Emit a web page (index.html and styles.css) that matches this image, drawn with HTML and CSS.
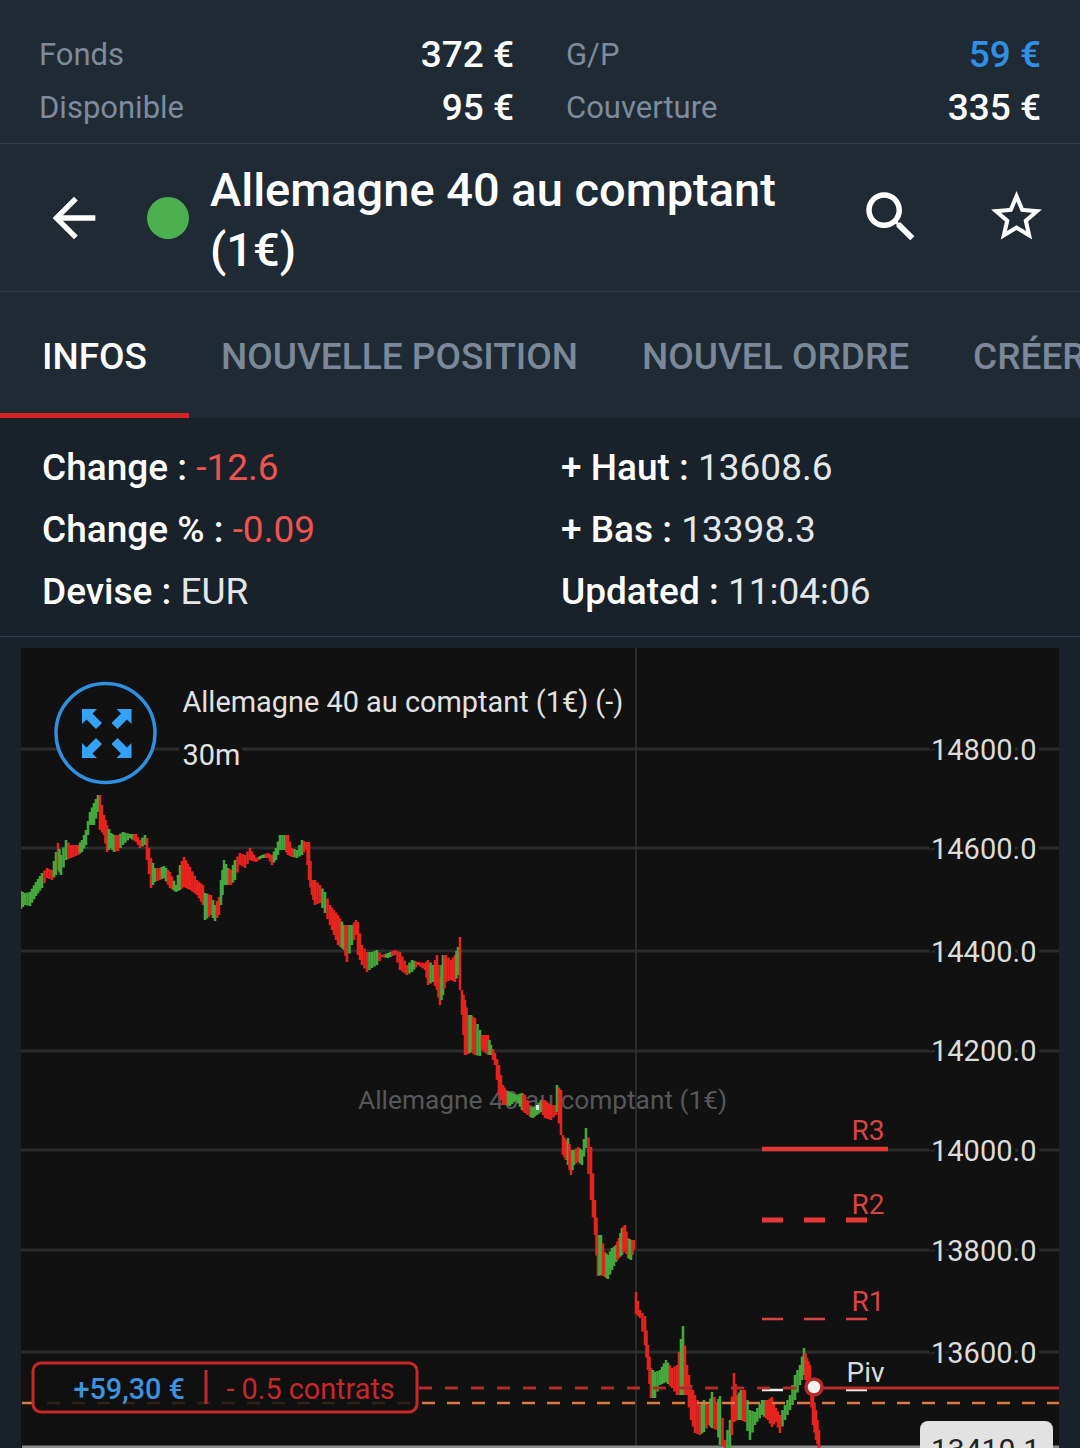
FILE: index.html
```html
<!DOCTYPE html>
<html lang="fr">
<head>
  <meta charset="UTF-8" />
  <meta name="viewport" content="width=device-width, initial-scale=1.0"/>
  <title>Allemagne 40 au comptant</title>
  <link rel="stylesheet" href="styles.css">
</head>
<body>
  <div class="screen">
    <!-- Account summary -->
    <div class="account">
      <div class="account-row"><span class="account-label">Fonds</span><span class="account-value">372 €</span></div>
      <div class="account-row"><span class="account-label">G/P</span><span class="account-value blue">59 €</span></div>
      <div class="account-row"><span class="account-label">Disponible</span><span class="account-value">95 €</span></div>
      <div class="account-row"><span class="account-label">Couverture</span><span class="account-value">335 €</span></div>
    </div>

    <!-- Instrument header -->
    <header class="instrument">
      <svg class="icon-back" viewBox="0 0 24 24"><path d="M20 11H7.83l5.59-5.59L12 4l-8 8 8 8 1.41-1.41L7.83 13H20v-2z"/></svg>
      <span class="status-dot"></span>
      <h1 class="instrument-name">Allemagne 40 au comptant (1€)</h1>
      <svg class="icon-search" viewBox="0 0 24 24"><path d="M15.5 14h-.79l-.28-.27C15.41 12.59 16 11.11 16 9.5 16 5.91 13.09 3 9.5 3S3 5.91 3 9.5 5.91 16 9.5 16c1.61 0 3.09-.59 4.23-1.57l.27.28v.79l5 4.99L20.49 19l-4.99-5zm-6 0C7.01 14 5 11.99 5 9.5S7.01 5 9.5 5 14 7.01 14 9.5 11.99 14 9.5 14z"/></svg>
      <svg class="icon-star" viewBox="0 0 24 24"><path d="M22 9.24l-7.19-.62L12 2 9.19 8.63 2 9.24l5.46 4.73L5.82 21 12 17.27 18.18 21l-1.63-7.03L22 9.24zM12 15.4l-3.76 2.27 1-4.28-3.32-2.88 4.38-.38L12 6.1l1.71 4.04 4.38.38-3.32 2.88 1 4.28L12 15.4z"/></svg>
    </header>

    <!-- Tabs -->
    <nav class="tabs">
      <a class="tab active">INFOS</a>
      <a class="tab">NOUVELLE POSITION</a>
      <a class="tab">NOUVEL ORDRE</a>
      <a class="tab">CRÉER</a>
    </nav>

    <!-- Quote details -->
    <div class="quote">
      <div><b>Change :</b> <span class="down">-12.6</span></div>
      <div><b>+ Haut :</b> 13608.6</div>
      <div><b>Change % :</b> <span class="down">-0.09</span></div>
      <div><b>+ Bas :</b> 13398.3</div>
      <div><b>Devise :</b> EUR</div>
      <div><b>Updated :</b> 11:04:06</div>
    </div>

    <!-- Chart: the viewBox uses page coordinates -->
    <div class="chart">
      <svg class="chart-svg" viewBox="21 648 1038 800">
        <g class="grid">
          <line x1="21" x2="1059" y1="749" y2="749"/>
          <line x1="21" x2="1059" y1="848" y2="848"/>
          <line x1="21" x2="1059" y1="951" y2="951"/>
          <line x1="21" x2="1059" y1="1051" y2="1051"/>
          <line x1="21" x2="1059" y1="1150" y2="1150"/>
          <line x1="21" x2="1059" y1="1250" y2="1250"/>
          <line x1="21" x2="1059" y1="1352" y2="1352"/>
          <line x1="636" x2="636" y1="648" y2="1448"/>
        </g>
        <line class="axis-bottom" x1="22" x2="1059" y1="1447" y2="1447"/>

        <text class="watermark" x="358" y="1109">Allemagne 40 au comptant (1€)</text>

        <g id="bars"></g>
        <rect class="spot" x="536" y="1105" width="3" height="5"/>

        <g class="axis">
          <text x="931" y="760">14800.0</text>
          <text x="931" y="859">14600.0</text>
          <text x="931" y="962">14400.0</text>
          <text x="931" y="1061">14200.0</text>
          <text x="931" y="1161">14000.0</text>
          <text x="931" y="1261">13800.0</text>
          <text x="931" y="1363">13600.0</text>
        </g>

        <text class="chart-title" x="182.5" y="712">Allemagne 40 au comptant (1€) (-)</text>
        <text class="chart-title outlined" x="182.5" y="765">30m</text>

        <circle class="expand-ring" cx="105.5" cy="733" r="49.5"/>
        <g class="expand-arrows">
          <path id="arrow" d="M82 709h15l-4.5 4.5 9.5 9.5-6 6-9.5-9.5-4.5 4.5z"/>
          <use href="#arrow" transform="matrix(-1 0 0 1 213.5 0)"/>
          <use href="#arrow" transform="matrix(1 0 0 -1 0 1467)"/>
          <use href="#arrow" transform="matrix(-1 0 0 -1 213.5 1467)"/>
        </g>

        <!-- Pivot levels -->
        <line class="level r3" x1="762" x2="888" y1="1149" y2="1149"/>
        <line class="level r2" x1="762" x2="867" y1="1220" y2="1220"/>
        <line class="level r1" x1="762" x2="867" y1="1319" y2="1319"/>
        <line class="level piv" x1="762" x2="867" y1="1390" y2="1390"/>
        <text class="level-label red" x="851.5" y="1140">R3</text>
        <text class="level-label red" x="851.5" y="1214">R2</text>
        <text class="level-label red" x="851.5" y="1311">R1</text>
        <text class="level-label" x="846.5" y="1382">Piv</text>

        <!-- Open position -->
        <line class="entry-line" x1="22" x2="1059" y1="1403" y2="1403"/>
        <line class="pos-dash" x1="419" x2="813" y1="1388" y2="1388"/>
        <line class="pos-solid" x1="813" x2="1059" y1="1388" y2="1388"/>
        <circle class="pos-dot" cx="814" cy="1387" r="8"/>
        <rect class="pos-box" x="33" y="1363" width="384" height="49" rx="8"/>
        <text class="pos-gain" x="73.5" y="1399">+59,30 €</text>
        <line class="pos-sep" x1="206" x2="206" y1="1370" y2="1404"/>
        <text class="pos-size" x="226.5" y="1399">- 0.5 contrats</text>

        <rect class="price-tag" x="920" y="1421" width="133" height="50" rx="8"/>
        <text class="price-text" x="931" y="1460">13410.1</text>
      </svg>
    </div>
  </div>
  <script src="chart.js"></script>
</body>
</html>
```

FILE: styles.css
```css
/* Global Reset */
* { margin: 0; padding: 0; box-sizing: border-box; }
html, body { height: 100%; background: #19212a; overflow: hidden; }
body { font-family: "Roboto", "Liberation Sans", sans-serif; color: #fff; }
.screen { width: 1080px; height: 1448px; overflow: hidden; }

/* Account summary */
.account {
  display: grid;
  grid-template-columns: 475px 475px;
  column-gap: 52px;
  grid-auto-rows: 53px;
  height: 144px;
  padding: 28px 39px 0 39px;
  background: #202a35;
  border-bottom: 1px solid #323d49;
}
.account-row { display: flex; justify-content: space-between; align-items: center; }
.account-label { font-size: 31px; color: #7d8b9c; }
.account-value { font-size: 37px; font-weight: 500; }
.blue { color: #2e90e6; }

/* Instrument header */
.instrument {
  display: flex;
  align-items: center;
  height: 148px;
  background: #202a35;
  border-bottom: 1px solid #323d49;
}
.instrument svg { fill: #fff; flex: none; }
.icon-back { width: 64px; height: 64px; margin-left: 42px; }
.status-dot {
  flex: none;
  width: 42px;
  height: 42px;
  margin-left: 41px;
  border-radius: 50%;
  background: #4caf50;
}
.instrument-name {
  flex: 1;
  margin-left: 21px;
  padding-top: 5px;
  font-size: 47px;
  font-weight: 500;
  line-height: 60px;
}
.icon-search { width: 66px; height: 66px; margin-top: -2px; }
.icon-star { width: 61px; height: 61px; margin: -2px 33px 0 62px; }

/* Tabs */
.tabs {
  display: flex;
  height: 126px;
  background: #202a35;
  white-space: nowrap;
}
.tab {
  flex: none;
  display: flex;
  align-items: center;
  padding: 2px 32px 0;
  font-size: 37px;
  font-weight: 500;
  color: #7a8899;
}
.tab.active {
  width: 189px;
  padding: 2px 0 0 42px;
  color: #fff;
  border-bottom: 5px solid #d32424;
  border-top: 5px solid transparent;
}

/* Quote details */
.quote {
  display: grid;
  grid-template-columns: 519px 1fr;
  grid-auto-rows: 62px;
  height: 219px;
  padding: 19px 0 0 42px;
  font-size: 37px;
  line-height: 62px;
  color: #e4e7ea;
  border-bottom: 1px solid #323d49;
}
.quote b { font-weight: 500; color: #fff; }
.quote .down { color: #ef5350; }

/* Chart */
.chart { margin: 11px 21px 0; height: 800px; background: #111; }
.chart-svg { display: block; width: 1038px; height: 800px; font-family: "Roboto", "Liberation Sans", sans-serif; }
.grid line { stroke: #2b2b2b; stroke-width: 3; }
.grid line:last-child { stroke-width: 2; }
.axis-bottom { stroke: #8a8a8a; stroke-width: 3; }
.watermark { font-size: 26.3px; fill: #57575b; }
.spot { fill: #e8e8e8; }
.axis text {
  font-size: 29px;
  fill: #dcdcdc;
  stroke: #111;
  stroke-width: 8px;
  paint-order: stroke;
}
.chart-title { font-size: 28.9px; fill: #e2e2e2; }
.chart-title.outlined { stroke: #111; stroke-width: 10px; paint-order: stroke; }
.expand-ring { fill: #111; stroke: #2f8fe0; stroke-width: 3.5; }
.expand-arrows { fill: #35a2f8; }

/* Pivot levels */
.level { stroke: #e53935; }
.level.r3 { stroke-width: 4.5; }
.level.r2 { stroke-width: 5; stroke-dasharray: 21 21; }
.level.r1 { stroke-width: 2.5; stroke-dasharray: 21 21; stroke: #d84343; }
.level.piv { stroke-width: 2.5; stroke-dasharray: 21 63; stroke: #f0f0f0; }
.level-label { font-size: 28px; fill: #dcdcdc; }
.level-label.red { fill: #d84343; }

/* Open position */
.entry-line { stroke: #e07a45; stroke-width: 2.5; stroke-dasharray: 13 12; }
.pos-dash { stroke: #b62a2a; stroke-width: 3; stroke-dasharray: 13 13; }
.pos-solid { stroke: #b62a2a; stroke-width: 3; }
.pos-dot { fill: #f2f2f2; stroke: #b62a2a; stroke-width: 3.5; }
.pos-box { fill: #111; fill-opacity: 0.85; stroke: #c62828; stroke-width: 3; }
.pos-gain { font-size: 28.8px; font-weight: 500; fill: #3d93e0; }
.pos-sep { stroke: #c62828; stroke-width: 3; }
.pos-size { font-size: 28.8px; fill: #c62828; }
.price-tag { fill: #e2e2e2; }
.price-text { font-size: 30px; fill: #222; }
```

FILE: chart.js
```js
// keypoints: x, top, bottom, r(ed) / g(reen) - bars are filled in between them
const points = `21 891 909 g,25 893 905 g,30 892 906 g,36 882 896 g,42 873 888 g,47 868 878 r,52 870 880 r,56 852 875 g,
58 843 870 r,61 855 875 g,66 840 860 g,71 845 858 r,78 845 855 r,82 840 852 g,86 830 845 g,90 812 825 g,94 803 825 g,
98 795 812 g,100 795 830 r,104 815 835 r,107 825 852 r,111 833 848 g,114 835 852 g,118 835 851 r,123 832 845 g,130 834 838 g,
136 834 842 r,140 840 848 r,145 835 845 g,147 838 860 r,151 858 888 r,155 868 882 g,160 868 880 r,164 866 878 g,170 872 888 r,
176 885 892 g,180 865 890 g,184 857 887 r,190 867 890 r,197 880 895 r,203 885 905 r,205 893 920 g,211 895 915 r,215 905 921 g,
219 897 915 r,221 880 905 g,224 860 885 g,228 868 885 g,231 870 885 r,235 860 880 g,240 853 865 r,245 855 868 r,250 848 860 r,
256 858 862 r,262 855 858 g,268 853 858 r,272 855 865 r,276 848 860 g,280 835 850 g,285 835 850 g,288 835 855 r,292 848 857 r,
297 850 858 g,302 840 855 g,306 842 850 r,309 842 880 r,312 880 895 r,315 880 905 r,320 885 903 r,325 892 913 g,330 905 925 r,
338 915 945 r,344 925 950 g,347 925 962 r,352 925 945 g,356 920 935 r,358 922 955 r,362 945 965 r,367 952 972 r,372 952 968 g,
377 950 965 g,382 955 957 r,388 953 958 g,395 950 955 r,400 952 970 r,407 965 975 r,412 960 972 g,418 962 965 r,425 963 970 r,
428 960 985 r,433 965 982 g,437 955 990 r,440 975 1005 r,443 955 995 g,446 955 982 r,451 960 980 r,455 955 982 r,458 947 975 g,
460 937 990 r,462 990 1015 r,465 1000 1055 r,468 1015 1054 r,471 1015 1052 g,475 1018 1055 r,480 1030 1056 g,482 1035 1050 r,
488 1035 1055 r,491 1045 1055 g,495 1053 1065 r,499 1065 1095 r,503 1085 1105 r,506 1090 1105 r,510 1092 1106 g,516 1095 1100 g,
522 1093 1110 g,525 1095 1113 r,530 1105 1117 r,533 1108 1118 g,537 1105 1115 g,541 1100 1112 g,545 1100 1118 r,551 1105 1120 r,
556 1105 1115 r,557 1085 1112 g,561 1090 1135 r,563 1135 1155 r,566 1140 1160 r,568 1138 1165 g,571 1150 1175 r,574 1150 1165 g,
578 1147 1162 r,582 1150 1165 g,586 1128 1148 g,591 1147 1200 r,595 1200 1235 r,598 1235 1276 r,601 1235 1275 g,605 1252 1277 r,
608 1255 1279 g,612 1248 1270 g,616 1245 1262 g,619 1238 1258 r,622 1228 1255 g,625 1225 1250 r,628 1238 1258 r,631 1240 1260 g,
634 1240 1250 r,636 1292 1314 r,640 1310 1318 r,645 1316 1345 r,648 1345 1370 r,651 1368 1398 r,655 1372 1398 g,660 1370 1385 g,
666 1360 1382 g,672 1368 1388 r,677 1365 1395 r,683 1326 1395 g,687 1365 1395 r,691 1385 1420 r,695 1395 1433 r,700 1405 1435 r,
704 1400 1432 g,709 1405 1425 r,712 1392 1428 g,717 1402 1430 r,720 1396 1445 g,725 1440 1448 r,730 1420 1448 g,734 1373 1422 r,
737 1395 1420 r,741 1390 1420 g,745 1390 1422 r,750 1410 1440 g,755 1412 1425 g,762 1400 1415 g,768 1400 1420 r,772 1397 1427 r,
776 1408 1422 r,780 1415 1433 r,785 1405 1420 g,790 1395 1410 g,795 1375 1400 g,800 1365 1385 g,804 1348 1375 g,807 1358 1385 r,
810 1365 1390 r,813 1395 1425 r,816 1410 1440 r,819 1430 1448 r`
  .split(",")
  .map(p => p.trim().split(" "));

const colors = { r: "#e5231f", g: "#45a83c" };
const bars = document.getElementById("bars");

function addBar(x, top, bottom, color) {
  const line = document.createElementNS("http://www.w3.org/2000/svg", "line");
  line.setAttribute("x1", x);
  line.setAttribute("x2", x);
  line.setAttribute("y1", top);
  line.setAttribute("y2", bottom);
  line.setAttribute("stroke", color);
  line.setAttribute("stroke-width", "2.6");
  bars.appendChild(line);
}

points.forEach((p, i) => {
  const x = +p[0], top = +p[1], bottom = +p[2];
  addBar(x, top, bottom, colors[p[3]]);
  const next = points[i + 1];
  if (!next) return;
  const steps = Math.floor((next[0] - x) / 2.6);
  for (let s = 1; s <= steps; s++) {
    const t = s / (steps + 1);
    addBar(
      x + (next[0] - x) * t,
      top + (next[1] - top) * t,
      bottom + (next[2] - bottom) * t,
      colors[t < 0.5 ? p[3] : next[3]]
    );
  }
});
```
